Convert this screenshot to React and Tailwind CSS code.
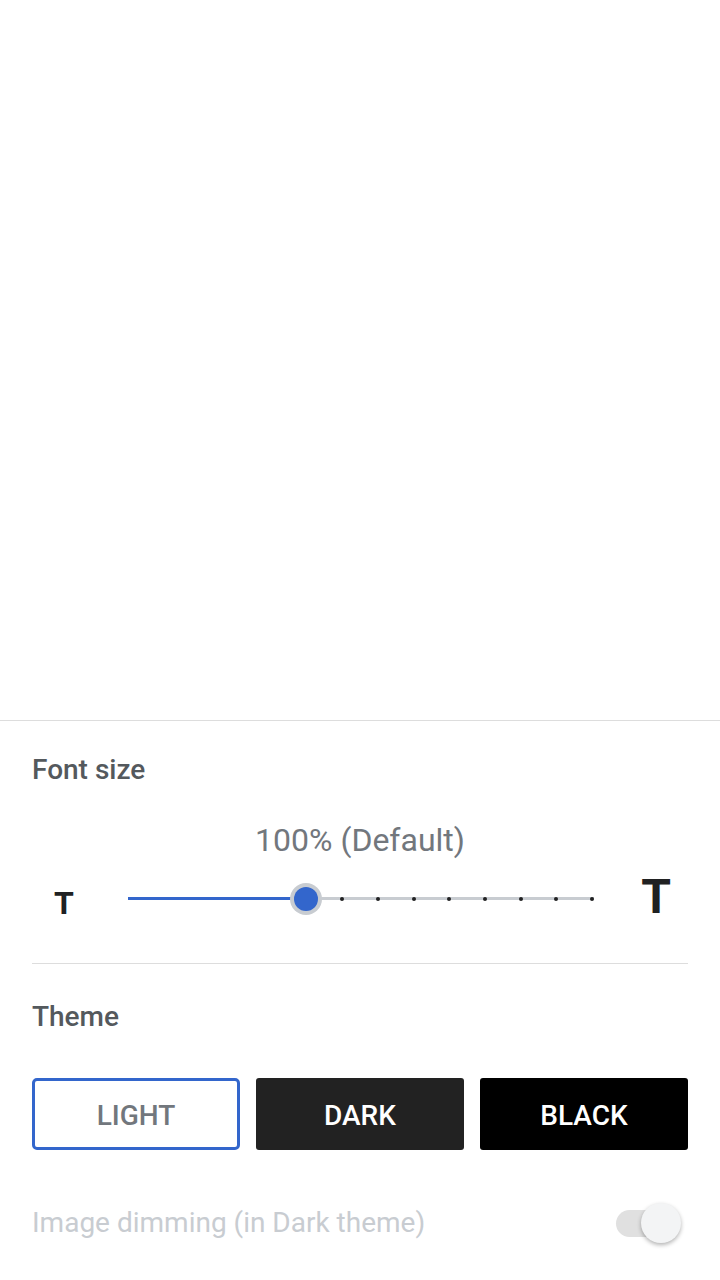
import React from "react";

const STEPS = 13;
const VALUE = 5;

function Slider() {
  const dots = [];
  for (let i = VALUE + 1; i <= STEPS; i++) dots.push(i);
  const pct = (VALUE / STEPS) * 100;
  return (
    <div className="relative h-8">
      <div className="absolute left-0 right-[-2px] top-[14px] h-[3px] bg-[#c8ccd1]" />
      <div
        className="absolute left-0 top-[14px] h-[3px] bg-[#3366cc]"
        style={{ width: pct + "%" }}
      />
      {dots.map((i) => (
        <div
          key={i}
          className="absolute top-[13.5px] h-1 w-1 -translate-x-1/2 rounded-full bg-[#202122]"
          style={{ left: (i / STEPS) * 100 + "%" }}
        />
      ))}
      <div
        className="absolute top-0 h-8 w-8 -translate-x-1/2 rounded-full bg-[#c8ccd1] p-1"
        style={{ left: pct + "%" }}
      >
        <div className="h-6 w-6 rounded-full bg-[#3366cc]" />
      </div>
    </div>
  );
}

export default function App() {
  return (
    <div className="flex min-h-[1280px] w-[720px] flex-col bg-white font-['Roboto',sans-serif]">
      <div className="h-[720px]" />
      <div className="border-t border-[#dddddd] px-8 pt-[33px]">
        <div className="text-[28px] font-medium leading-8 text-[#54595d]">Font size</div>
        <div className="mt-[34px] text-center text-[32px] leading-10 text-[#72777d]">
          100% (Default)
        </div>
        <div className="mt-[10px] flex h-14 items-start">
          <div className="mt-[17px] w-16 text-center text-[32px] font-bold leading-[32px] text-[#202122]">
            T
          </div>
          <div className="mt-[13px] flex-1 px-8">
            <Slider />
          </div>
          <div className="mt-[3px] w-16 text-center text-[48px] font-bold leading-[48px] text-[#202122]">
            T
          </div>
        </div>
        <div className="mt-[37px] h-px bg-[#dddddd]" />
        <div className="mt-[37px] text-[28px] font-medium leading-8 text-[#54595d]">Theme</div>
        <div className="mt-[45px] grid grid-cols-3 gap-4">
          <div className="flex h-[72px] items-center justify-center rounded-[5px] border-[3px] border-[#3366cc] bg-white pt-[3px] text-[28px] font-medium leading-8 text-[#72777d]">
            LIGHT
          </div>
          <div className="flex h-[72px] items-center justify-center rounded-[3px] bg-[#222222] pt-[3px] text-[28px] font-medium leading-8 text-white">
            DARK
          </div>
          <div className="flex h-[72px] items-center justify-center rounded-[3px] bg-black pt-[3px] text-[28px] font-medium leading-8 text-white">
            BLACK
          </div>
        </div>
        <div className="mt-[53px] flex items-center justify-between pr-[7px]">
          <div className="text-[28px] leading-9 text-[#c8ccd1]">Image dimming (in Dark theme)</div>
          <div className="relative h-10 w-[65px]">
            <div className="absolute left-0 top-[7px] h-[27px] w-[56px] rounded-full bg-[#e0e0e0]" />
            <div className="absolute right-0 top-0 h-10 w-10 rounded-full bg-[#f3f4f5] shadow-[0_2px_4px_rgba(0,0,0,0.3)]" />
          </div>
        </div>
      </div>
    </div>
  );
}
